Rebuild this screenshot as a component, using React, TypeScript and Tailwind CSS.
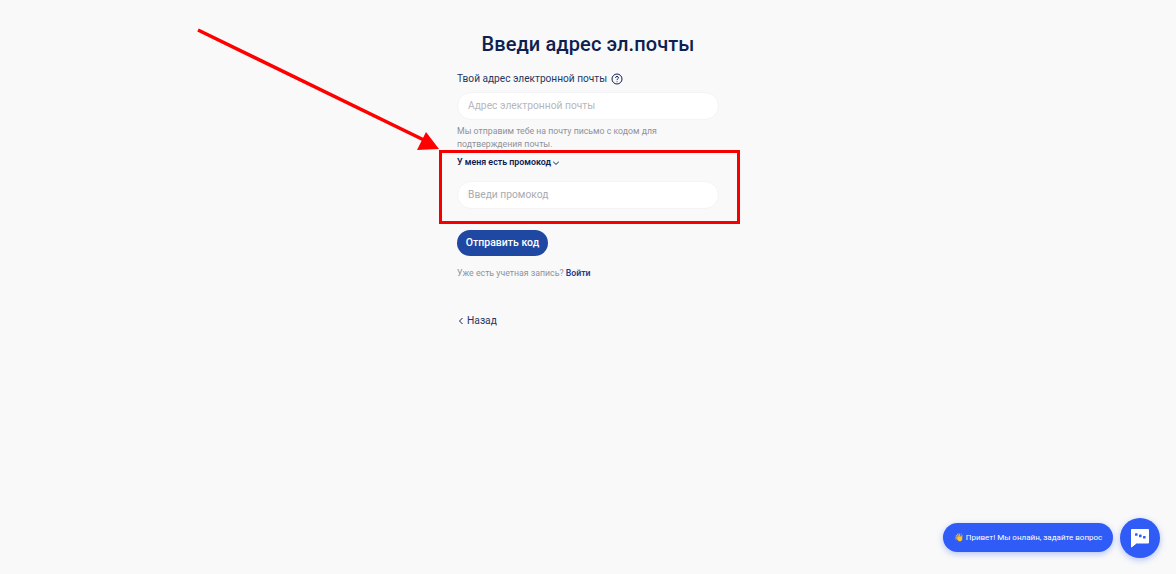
import React from "react";

function ChatIcon() {
  return (
    <svg width="20" height="20" viewBox="0 0 20 20">
      <path d="M1.5 1.5 H18.5 V15 H6.5 L1.5 19 Z" fill="#fff" stroke="#fff" strokeWidth="1" strokeLinejoin="round" />
      <rect x="5" y="5.2" width="2.6" height="2.6" rx="0.6" fill="#2f5cf6" />
      <rect x="9" y="6.6" width="2.6" height="2.6" rx="0.6" fill="#2f5cf6" />
      <rect x="13" y="8" width="2.6" height="2.6" rx="0.6" fill="#2f5cf6" />
    </svg>
  );
}

export default function App() {
  return (
    <div className="relative h-[574px] w-[1176px] overflow-hidden bg-[#f9f9f9] font-['Roboto',sans-serif] text-[#0d2150]">
      <main className="mx-auto flex w-[262px] flex-col pt-[30px]">
        <h1 className="whitespace-nowrap text-center text-[20px] font-medium leading-[28px] tracking-[0.1px]">Введи адрес эл.почты</h1>
        <div className="mt-[13px] flex h-[16px] items-center gap-[4px] text-[10.15px] leading-[16px] text-[#26375f]">
          <span>Твой адрес электронной почты</span>
          <svg width="12" height="12" viewBox="0 0 12 12" fill="none" stroke="#0d2150" strokeWidth="1">
            <circle cx="6" cy="6" r="5" />
            <path d="M4.5 4.8 C4.5 3 7.5 3 7.5 4.8 C7.5 5.8 6 5.8 6 7.1" />
            <path d="M6 8.4 V9.2" />
          </svg>
        </div>
        <div className="mt-[5px] flex h-[28px] items-center rounded-full border border-[#f4f4f6] bg-white pl-[10px] text-[10.25px] text-[#b5b7bd]">Адрес электронной почты</div>
        <p className="mt-[5px] text-[8.75px] leading-[13px] text-[#8f9299]">Мы отправим тебе на почту письмо с кодом для<br />подтверждения почты.</p>
        <div className="mt-[5px] flex h-[14px] items-center gap-[1px] text-[8.85px] font-semibold">
          <span>У меня есть промокод</span>
          <svg width="8" height="8" viewBox="0 0 8 8" fill="none" stroke="#0d2150" strokeWidth="1"><path d="M1.2 2.8 L4 5.4 L6.8 2.8" /></svg>
        </div>
        <div className="mt-[11px] flex h-[28px] items-center rounded-full border border-[#f4f4f6] bg-white pl-[10px] text-[10.25px] text-[#a9abb2]">Введи промокод</div>
        <button className="mt-[21px] flex h-[26px] w-[91px] items-center justify-center rounded-full bg-[#1f48a3] text-[10.5px] font-medium text-white">Отправить код</button>
        <p className="mt-[10px] text-[8.75px] leading-[14px] text-[#8f9299]">Уже есть учетная запись? <span className="font-semibold text-[#1f3f8f]">Войти</span></p>
        <div className="mt-[33px] flex h-[16px] items-center gap-[3px] pl-[1px] text-[10.25px] text-[#26375f]">
          <svg width="6" height="8" viewBox="0 0 6 8" fill="none" stroke="#0d2150" strokeWidth="1"><path d="M4.5 1 L1.5 4 L4.5 7" /></svg>
          <span>Назад</span>
        </div>
      </main>

      <svg className="pointer-events-none absolute left-0 top-0" width="1176" height="574">
        <line x1="198" y1="30" x2="428" y2="142" stroke="#ff0000" strokeWidth="3.5" />
        <polygon points="426,132 417,150 439,149" fill="#ff0000" />
      </svg>
      <div className="pointer-events-none absolute left-[439px] top-[150px] h-[74px] w-[301px] border-[3px] border-[#f40000]" />

      <div className="absolute bottom-[22px] left-[943px] flex h-[29px] w-[170px] items-center justify-center rounded-full bg-[#2f5cf6] text-[8px] text-white shadow-[0_2px_6px_rgba(47,92,246,0.35)]">
        <span className="whitespace-nowrap">👋 Привет! Мы онлайн, задайте вопрос</span>
      </div>
      <div className="absolute left-[1120px] top-[518px] flex h-[40px] w-[40px] items-center justify-center rounded-full bg-[#2f5cf6] shadow-[0_2px_6px_rgba(47,92,246,0.35)]">
        <ChatIcon />
      </div>
    </div>
  );
}
